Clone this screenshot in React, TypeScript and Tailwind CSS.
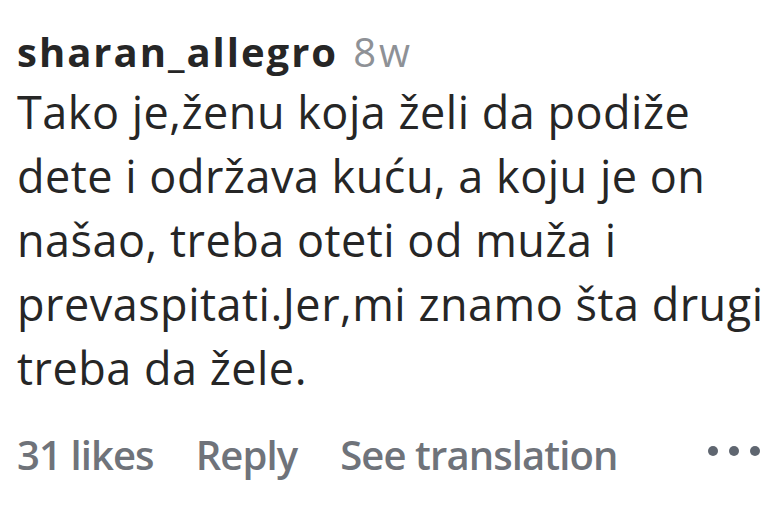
export default function App() {
  const lines = [
    "Tako je,ženu koja želi da podiže",
    "dete i održava kuću, a koju je on",
    "našao, treba oteti od muža i",
    "prevaspitati.Jer,mi znamo šta drugi",
    "treba da žele.",
  ];

  return (
    <div className="w-[765px] h-[510px] bg-white overflow-hidden pl-[17px] pt-[26px] font-['Open_Sans',sans-serif]">
      {/* header */}
      <div className="flex items-baseline h-[52px] leading-[52px] whitespace-nowrap">
        <span className="text-[40px] font-bold text-[#262626] tracking-[2px]">sharan_allegro</span>
        <span className="ml-[15px] text-[40px] text-[#8e9196] tracking-[3px]">8w</span>
      </div>

      {/* comment body */}
      <div className="mt-[2px] text-[45px] text-[#262626] tracking-[0.5px] whitespace-nowrap">
        {lines.map((l) => (
          <div key={l} className="h-[64px] leading-[64px]">
            {l}
          </div>
        ))}
      </div>

      {/* actions */}
      <div className="mt-[30px] flex items-center h-[50px] leading-[50px] text-[40px] text-[#6f737a] font-semibold whitespace-nowrap tracking-[-0.9px]">
        <span>31 likes</span>
        <span className="ml-[42px]">Reply</span>
        <span className="ml-[43px]">See translation</span>
        <span className="ml-auto mr-[5px] mt-[-8px] flex gap-[11px]">
          <span className="w-[10px] h-[10px] rounded-full bg-[#5f6670]" />
          <span className="w-[10px] h-[10px] rounded-full bg-[#5f6670]" />
          <span className="w-[10px] h-[10px] rounded-full bg-[#5f6670]" />
        </span>
      </div>
    </div>
  );
}
